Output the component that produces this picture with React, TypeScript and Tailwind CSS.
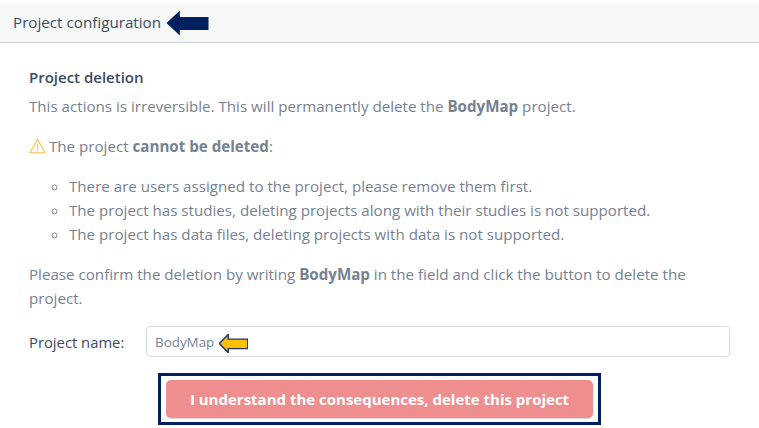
const font = "font-['Open_Sans','Noto_Sans',sans-serif]";

function ArrowLeft({ className, fill, stroke }: { className: string; fill: string; stroke?: string }) {
  return (
    <svg className={className} viewBox="0 0 42 26" preserveAspectRatio="none">
      <path d="M0.5 13 L13.5 0.5 V7 H41.5 V20 H13.5 V25.5 Z" fill={fill} stroke={stroke ?? "none"} strokeWidth={stroke ? 2 : 0} />
    </svg>
  );
}

function WarnIcon() {
  return (
    <svg className="w-[17px] h-[16px] shrink-0" viewBox="0 0 17 16" fill="none">
      <path d="M8.5 1.2 L16 14.8 H1 Z" stroke="#fbbf4d" strokeWidth="1.1" strokeLinejoin="round" />
      <path d="M8.5 5.5 V10.5" stroke="#fbbf4d" strokeWidth="1.2" />
      <path d="M8.5 11.6 V13.2" stroke="#fbbf4d" strokeWidth="1.2" />
    </svg>
  );
}

const reasons = [
  "There are users assigned to the project, please remove them first.",
  "The project has studies, deleting projects along with their studies is not supported.",
  "The project has data files, deleting projects with data is not supported.",
];

export default function App() {
  return (
    <div className={`w-[759px] h-[428px] overflow-hidden bg-white pt-[3px] text-[15.15px] leading-[24px] text-[#768192] ${font}`}>
      {/* Card header */}
      <div className="flex items-center h-[40px] pl-[13px] pb-[1px] bg-[#f7f8f8] border-b border-[#cfd2d4] text-[#3c4b64] text-[15.2px]">
        <span>Project configuration</span>
        <ArrowLeft className="w-[43px] h-[26px] ml-[5px] mt-[1px]" fill="#002060" />
      </div>

      {/* Card body */}
      <div className="pl-[29px] pr-[29px] pt-[22px]">
        <h2 className="font-semibold text-[#3c4b64] text-[15px]">Project deletion</h2>
        <p className="mt-[5px]">
          This actions is irreversible. This will permanently delete the <b className="font-bold">BodyMap</b> project.
        </p>
        <p className="mt-[16px] flex items-center gap-[3px]">
          <WarnIcon />
          <span>
            The project <b className="font-bold">cannot be deleted</b>:
          </span>
        </p>
        <ul className="mt-[16px] pl-[40px] list-[circle]">
          {reasons.map((r) => (
            <li key={r}>{r}</li>
          ))}
        </ul>
        <p className="mt-[16px] w-[680px]">
          Please confirm the deletion by writing <b className="font-bold">BodyMap</b> in the field and click the button to delete the
          <br />
          project.
        </p>

        <div className="mt-[16px] flex items-center">
          <label className="w-[117px] shrink-0 text-[#3c4b64] text-[14.8px]">Project name:</label>
          <div className="relative flex items-center w-[584px] h-[31px] pl-[8px] bg-white border border-[#d8dbe0] rounded-[4px] text-[13.4px]">
            <span>BodyMap</span>
            <ArrowLeft className="absolute left-[72px] top-[7px] w-[29px] h-[19px]" fill="#ffc000" stroke="#1f3864" />
          </div>
        </div>

        <div className="mt-[16px] ml-[129px] w-[443px] h-[52px] border-[3px] border-[#002060] flex items-center justify-center">
          <button className="w-[427px] h-[38px] rounded-[5px] bg-[#ee8e8e] text-white font-bold text-[15px] shadow-[0_1px_1px_rgba(0,0,0,0.15)]">
            I understand the consequences, delete this project
          </button>
        </div>
      </div>
    </div>
  );
}
